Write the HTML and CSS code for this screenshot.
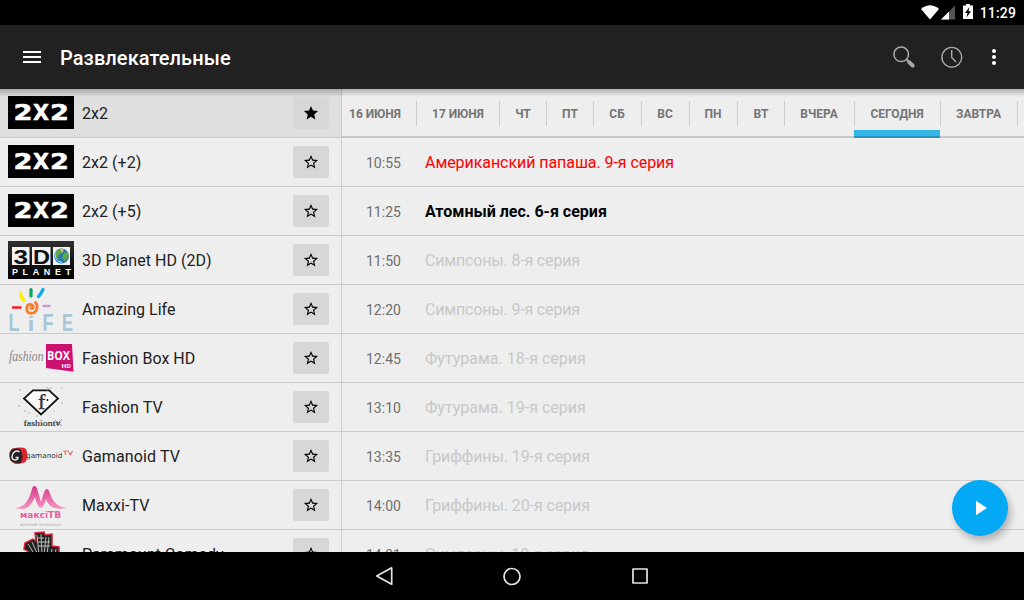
FILE: index.html
```html
<!DOCTYPE html>
<html lang="ru">
<head>
<meta charset="utf-8">
<title>Развлекательные</title>
<link rel="stylesheet" href="styles.css">
</head>
<body>
<svg width="0" height="0" class="defs">
  <defs>
    <symbol id="star" viewBox="-.7 -.7 25.4 25.4"><path d="M22 9.24l-7.19-.62L12 2 9.19 8.63 2 9.24l5.46 4.73L5.82 21 12 17.27 18.18 21l-1.63-7.03L22 9.24zM12 15.4l-3.76 2.27 1-4.28-3.32-2.88 4.38-.38L12 6.1l1.71 4.04 4.38.38-3.32 2.88 1 4.28L12 15.4z"/></symbol>
    <symbol id="star-full" viewBox="-.7 -.7 25.4 25.4"><path d="M12 17.27L18.18 21l-1.64-7.03L22 9.24l-7.19-.61L12 2 9.19 8.63 2 9.24l5.46 4.73L5.82 21z"/></symbol>
    <symbol id="logo-2x2" viewBox="0 0 66 48">
      <rect y="7" width="66" height="33" fill="#000"/>
      <text x="5.500" y="31" textLength="19" lengthAdjust="spacingAndGlyphs" class="logo-wide">2</text>
      <text x="25" y="31" textLength="16" lengthAdjust="spacingAndGlyphs" class="logo-wide">X</text>
      <text x="42" y="31" textLength="19" lengthAdjust="spacingAndGlyphs" class="logo-wide">2</text>
    </symbol>
  </defs>
</svg>
<div class="screen">
  <div class="status">
    <svg width="60" height="25" viewBox="916 0 60 25">
      <path d="M921 9Q930 1.500 939 9L930 19.500Z" fill="#fff"/>
      <path d="M941 19.500L955 5.500V19.500Z" fill="#555"/>
      <path d="M941 19.500L949 11.500V19.500Z" fill="#fff"/>
      <path d="M963 5.500H966V4H970V5.500H973V19H963Z" fill="#fff"/>
      <path d="M969.500 7L965 13H967.500L966.500 17.500L971 11.200H968.500Z" fill="#000"/>
    </svg>
    <span class="clock">11:29</span>
  </div>
  <header class="appbar">
    <svg class="menu" width="18" height="12" viewBox="0 0 18 12"><path d="M0 1H18M0 6H18M0 11H18" stroke="#fff" stroke-width="2"/></svg>
    <h1>Развлекательные</h1>
    <svg class="actions" width="124" height="64" viewBox="884 25 124 64" fill="none">
      <circle cx="901.200" cy="54.300" r="7.300" stroke="#aaa" stroke-width="1.500"/>
      <path d="M906.500 59.500L909 62" stroke="#aaa" stroke-width="1.800"/>
      <path d="M909.300 62.300L912.700 65.700" stroke="#aaa" stroke-width="4" stroke-linecap="round"/>
      <circle cx="951.800" cy="57.300" r="9.900" stroke="#aaa" stroke-width="1.400"/>
      <path d="M951.700 50V57.500L956 62" stroke="#aaa" stroke-width="1.400"/>
      <g fill="#fff"><circle cx="994" cy="51" r="2"/><circle cx="994" cy="57" r="2"/><circle cx="994" cy="63" r="2"/></g>
    </svg>
  </header>
  <main class="content">
    <section class="channels">
      <div class="channel selected"><svg class="logo"><use href="#logo-2x2"/></svg><span class="name">2x2</span><span class="fav"><svg><use href="#star-full"/></svg></span></div>
      <div class="channel"><svg class="logo"><use href="#logo-2x2"/></svg><span class="name">2x2 (+2)</span><span class="fav"><svg><use href="#star"/></svg></span></div>
      <div class="channel"><svg class="logo"><use href="#logo-2x2"/></svg><span class="name">2x2 (+5)</span><span class="fav"><svg><use href="#star"/></svg></span></div>
      <div class="channel">
        <svg class="logo" viewBox="0 0 66 48">
          <defs><linearGradient id="planet" x2="0" y2="1"><stop stop-color="#303030"/><stop offset="1"/></linearGradient></defs>
          <rect y="5" width="66" height="38" fill="url(#planet)"/>
          <g fill="#f3f3f3"><rect x="4" y="11" width="17.500" height="18"/><rect x="24" y="11" width="18.500" height="18"/><rect x="45" y="11" width="17" height="18"/></g>
          <text x="5.500" y="27.600" textLength="14.500" lengthAdjust="spacingAndGlyphs" class="logo-3d">3</text>
          <text x="25" y="27.600" textLength="17" lengthAdjust="spacingAndGlyphs" class="logo-3d">D</text>
          <circle cx="53.500" cy="20" r="7.500" fill="#2879b8"/>
          <path d="M48 15L53 12.500L56 14L53 18L50 19L51 24L47 21ZM56 17L60 16L61 20L57 25L54 22Z" fill="#62a844"/>
          <path d="M52 13L56 13.500L54 17Z" fill="#e5c35a"/>
          <path d="M47 16Q46 25 54 26.500" stroke="#b7e6fa" fill="none"/>
          <text x="4" y="39.300" textLength="59" class="logo-planet">PLANET</text>
        </svg><span class="name">3D Planet HD (2D)</span><span class="fav"><svg><use href="#star"/></svg></span></div>
      <div class="channel">
        <svg class="logo" viewBox="0 0 66 48" fill="none" stroke-linecap="round">
          <path d="M5 22.500H12.500" stroke="#ee2228" stroke-width="2.600"/>
          <path d="M12.500 8Q13 13 16 15.500" stroke="#fff000" stroke-width="3.200"/>
          <path d="M23 4.500V11" stroke="#08a55b" stroke-width="3.200"/>
          <path d="M35 4.500Q33 9 30.500 11.500" stroke="#12a9ed" stroke-width="3.200"/>
          <path d="M35.500 21H41.500" stroke="#c59bd0" stroke-width="2.400"/>
          <path d="M27.500 17.500C30.500 21 29 28 23.500 28.300C17.500 28.500 17.500 20.500 21.500 19.500C24.500 19 26 22 24.500 23.300Q23.500 24 22.800 23" stroke="#f4802d" stroke-width="2.900"/>
          <g class="logo-life"><text x=".5" y="46" textLength="11" lengthAdjust="spacingAndGlyphs">L</text><text x="34.500" y="46" textLength="11" lengthAdjust="spacingAndGlyphs">F</text><text x="54" y="46" textLength="11" lengthAdjust="spacingAndGlyphs">E</text></g>
          <text x="19.500" y="46" textLength="7" lengthAdjust="spacingAndGlyphs" class="logo-life-i">i</text>
        </svg><span class="name">Amazing Life</span><span class="fav"><svg><use href="#star"/></svg></span></div>
      <div class="channel">
        <svg class="logo" viewBox="0 0 66 48">
          <text x="1" y="26.500" textLength="34.500" lengthAdjust="spacingAndGlyphs" class="logo-fashion">fashion</text>
          <path d="M38 10H64L65.500 37.800L38 34Z" fill="#cb1070"/>
          <text x="39" y="26.200" textLength="23" lengthAdjust="spacingAndGlyphs" class="logo-box">BOX</text>
          <text x="53.500" y="34" textLength="9.500" lengthAdjust="spacingAndGlyphs" class="logo-hd">HD</text>
        </svg><span class="name">Fashion Box HD</span><span class="fav"><svg><use href="#star"/></svg></span></div>
      <div class="channel">
        <svg class="logo" viewBox="0 0 66 48">
          <path d="M25 7.300H41L50 15.500L33 31.500L16 15.500Z" fill="#f8f8f8" stroke="#151515" stroke-width="1.800"/>
          <text x="30" y="25.500" class="logo-f">f</text><circle cx="39.500" cy="17" r=".9"/>
          <path d="M38 4L44 8M44 4L39 8" stroke="#999" stroke-width=".6"/>
          <g fill="#999"><circle cx="12" cy="7" r=".7"/><circle cx="54" cy="5" r=".6"/><circle cx="11" cy="23" r=".8"/><circle cx="17" cy="28" r=".7"/><circle cx="21" cy="30" r=".7"/><circle cx="54" cy="20" r=".7"/><circle cx="46" cy="28" r=".5"/><circle cx="29" cy="33" r=".8"/></g>
          <text x="15.500" y="42.500" textLength="37" lengthAdjust="spacingAndGlyphs" class="logo-ftv">fashiontv</text>
          <path d="M47 37L54 43M54 36L48 42" stroke="#555" stroke-width=".6"/>
        </svg><span class="name wide">Fashion TV</span><span class="fav"><svg><use href="#star"/></svg></span></div>
      <div class="channel">
        <svg class="logo" viewBox="0 0 66 48">
          <path d="M6 16.500Q14 14.500 18 17Q21 24 17.500 30Q13 32.500 6 31.500Z" fill="#dc2431"/>
          <path d="M4 17Q11 15 13 18Q16 25 13 31Q5 32 2.500 28Q0 21 4 17Z" fill="#202020" stroke="#b42731" stroke-width=".6"/>
          <path d="M11.500 20C8 17.500 4 20.500 4 24.500C4 29 10 29 10 25.500H7.500" fill="none" stroke="#eee" stroke-width="1.400"/>
          <text x="18" y="26" textLength="36.500" lengthAdjust="spacingAndGlyphs" class="logo-game">gamanoid</text>
          <text x="55" y="22.700" textLength="10" lengthAdjust="spacingAndGlyphs" class="logo-tv">TV</text>
        </svg><span class="name wide">Gamanoid TV</span><span class="fav"><svg><use href="#star"/></svg></span></div>
      <div class="channel">
        <svg class="logo" viewBox="0 0 66 48">
          <defs><linearGradient id="pink" x2="0" y2="1"><stop stop-color="#d93487"/><stop offset="1" stop-color="#f49ac4"/></linearGradient></defs>
          <path d="M7 27C17 26.500 21 19 24 8C25 3.500 29 4 30 11L33 21C35 16 36 8 39 8C43 8 41 25 59 27C48 29 41 27 38 18C35 30 30 30 27 16C22 27 17 30 7 27Z" fill="url(#pink)"/>
          <text x="12" y="37" textLength="41" lengthAdjust="spacingAndGlyphs" class="logo-maxi">максіТВ</text>
          <text x="12" y="44.500" textLength="41" lengthAdjust="spacingAndGlyphs" class="logo-tiny">жіночий телеканал</text>
        </svg><span class="name wide">Maxxi-TV</span><span class="fav"><svg><use href="#star"/></svg></span></div>
      <div class="channel">
        <svg class="logo" viewBox="0 0 66 48">
          <path d="M17 13L25 9L28 11L27 3L36 2L37 5L44 4L44 16L51 17L51 30H19L21 22L16 19Z" fill="#222" stroke="#d42336" stroke-width="1.500"/>
          <path d="M29 5L31 25M33 4L34 25M38 7L36 25M41 7L39 25M20 14L27 25M24 12L30 25M44 19L43 25M48 19L47 25M29 8H36M29 12H42M30 16H42" stroke="#bbb" stroke-width="1"/>
        </svg><span class="name">Paramount Comedy</span><span class="fav"><svg><use href="#star"/></svg></span></div>
    </section>
    <section class="guide">
      <nav class="tabs">
        <span class="tab june16">16 ИЮНЯ</span><span class="tab june17">17 ИЮНЯ</span><span class="tab day">ЧТ</span><span class="tab day">ПТ</span><span class="tab day-wide">СБ</span><span class="tab day-wide">ВС</span><span class="tab day-wide">ПН</span><span class="tab day">ВТ</span><span class="tab yesterday">ВЧЕРА</span><span class="tab today">СЕГОДНЯ</span><span class="tab tomorrow">ЗАВТРА</span>
      </nav>
      <div class="show past"><time>10:55</time><span>Американский папаша. 9-я серия</span></div>
      <div class="show now"><time>11:25</time><span>Атомный лес. 6-я серия</span></div>
      <div class="show tight"><time>11:50</time><span>Симпсоны. 8-я серия</span></div>
      <div class="show tight"><time>12:20</time><span>Симпсоны. 9-я серия</span></div>
      <div class="show"><time>12:45</time><span>Футурама. 18-я серия</span></div>
      <div class="show"><time>13:10</time><span>Футурама. 19-я серия</span></div>
      <div class="show snug"><time>13:35</time><span>Гриффины. 19-я серия</span></div>
      <div class="show snug"><time>14:00</time><span>Гриффины. 20-я серия</span></div>
      <div class="show tight"><time>14:31</time><span>Симпсоны. 10-я серия</span></div>
    </section>
    <div class="shade"></div>
    <div class="play"><svg width="56" height="56"><path d="M24 20.800V35.200L35 28Z" fill="#fff"/></svg></div>
  </main>
  <footer class="nav">
    <svg width="20" height="22"><path d="M17.700 2.800V19.200L2.700 11Z"/></svg>
    <svg width="20" height="22"><circle cx="10" cy="11.500" r="8"/></svg>
    <svg width="20" height="22"><rect x="3" y="4" width="14" height="14"/></svg>
  </footer>
</div>
</body>
</html>
```
FILE: styles.css
```css
* { box-sizing: border-box; }
body { margin: 0; background: #000; font-family: Roboto, sans-serif; }
.defs { position: absolute; }
.screen { width: 1024px; height: 600px; display: flex; flex-direction: column; overflow: hidden; }
.status { height: 25px; flex: none; display: flex; justify-content: flex-end; padding-right: 8px; background: #000; color: #fff; }
.clock { width: 40px; font-size: 14px; font-weight: 500; line-height: 26px; letter-spacing: .15px; text-align: right; white-space: nowrap; }
.appbar { height: 64px; flex: none; display: flex; align-items: center; padding: 0 16px 0 23px; background: #212121; color: #fff; }
.menu { margin-right: 19px; }
h1 { margin: 2px 0 0; font-size: 20px; font-weight: 500; letter-spacing: .08px; }
.actions { margin-left: auto; }
.content { position: relative; height: 463px; flex: none; display: flex; overflow: hidden; background: #eee; }
.channels { width: 342px; flex: none; border-right: 1px solid #ccc; }
.channel { height: 49px; display: flex; align-items: center; padding: 0 12px 0 8px; border-bottom: 1px solid #ccc; }
.selected { background: #dfdfdf; }
.logo { width: 66px; height: 48px; flex: none; overflow: visible; }
.name { flex: 1; margin-left: 8px; font-size: 16px; color: #212121; letter-spacing: .03px; }
.wide { letter-spacing: .12px; }
.fav { width: 36px; height: 32px; display: grid; place-items: center; border-radius: 2px; background: #d6d8d7; }
.fav svg { width: 18px; height: 18px; }
.guide { flex: 1; min-width: 0; }
.tabs { height: 49px; display: flex; padding-top: 12px; border-bottom: 2px solid #c8c8c8; }
.tab { height: 25px; flex: none; border-right: 1px solid #ccc; font-size: 12px; font-weight: 700; line-height: 26px; letter-spacing: -.05px; text-align: center; color: #757575; }
.june16 { width: 75px; padding-right: 8px; }
.june17 { width: 83px; }
.day { width: 47px; }
.day-wide { width: 48px; padding-right: 1px; }
.yesterday { width: 70px; padding-right: 1px; }
.today { position: relative; width: 86px; padding-right: 1px; }
.today::after { content: ""; position: absolute; left: -1px; top: 29px; width: 86px; height: 8px; background: linear-gradient(#33b5e5 75%, #2a94bc 75%); }
.tomorrow { width: 77px; padding-right: 1px; }
.show { height: 49px; display: flex; align-items: center; border-bottom: 1px solid #ccc; font-size: 16px; color: #c8c8c8; }
.show time { width: 59px; flex: none; margin-left: 24px; font-size: 14px; letter-spacing: 0; color: #6f6f6f; padding-top: 1px; }
.past { color: #f00; letter-spacing: -.06px; }
.now { color: #000; font-weight: 700; }
.now time { font-weight: 400; }
.tight { letter-spacing: -.17px; }
.snug { letter-spacing: -.1px; }
.shade { position: absolute; inset: 0 0 auto; height: 8px; background: linear-gradient(rgba(0,0,0,.25), rgba(0,0,0,0)); }
.play { position: absolute; left: 952px; top: 391px; width: 56px; height: 56px; border-radius: 50%; background: #03a9f4; box-shadow: 3px 5px 7px rgba(0,0,0,.25); }
.nav { height: 48px; display: flex; align-items: center; justify-content: center; gap: 108px; background: #000; }
.nav svg { fill: none; stroke: #e4e4e4; stroke-width: 1.7; stroke-linejoin: round; }
.logo-wide { font: 700 21px "DejaVu Sans", sans-serif; fill: #fff; stroke: #fff; stroke-width: .5px; }
.logo-3d { font: 700 20.5px "Liberation Sans", sans-serif; fill: #111; }
.logo-planet { font: 700 9px "Liberation Sans", sans-serif; fill: #fff; }
.logo-life { font: 700 24px "Liberation Sans", sans-serif; fill: #a8c6d6; }
.logo-life-i { font: 700 20px "Liberation Sans", sans-serif; fill: #a8c6d6; }
.logo-fashion { font: italic 14px "Liberation Serif", serif; fill: #888; }
.logo-box { font: 700 12px "Open Sans", sans-serif; fill: #fff; }
.logo-hd { font: 700 5.5px "Open Sans", sans-serif; fill: #fff; }
.logo-f { font: 22px "Liberation Serif", serif; fill: #333; stroke: #333; stroke-width: .4px; }
.logo-ftv { font: 9px "Liberation Serif", serif; fill: #333; stroke: #333; stroke-width: .2px; }
.logo-game { font: 7px "DejaVu Sans", sans-serif; fill: #333; }
.logo-tv { font: 6px "DejaVu Sans", sans-serif; fill: #dc2431; }
.logo-maxi { font: 700 8.5px "DejaVu Sans", sans-serif; fill: #e85fa1; }
.logo-tiny { font: 4px "DejaVu Sans", sans-serif; fill: #aaa; }
```
